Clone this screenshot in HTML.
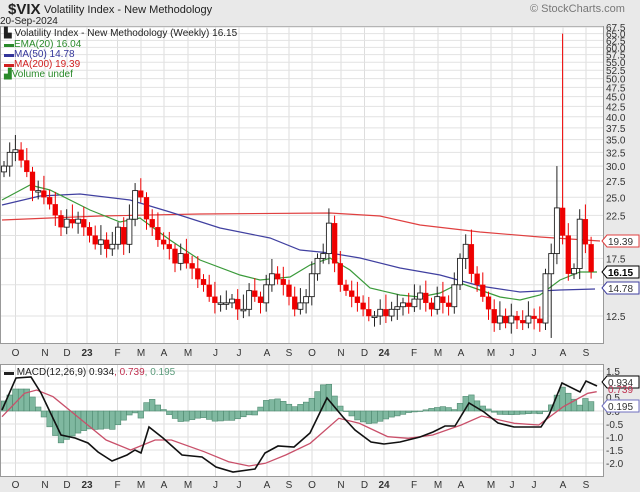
<!DOCTYPE html>
<html><head><meta charset="utf-8"><style>
html,body{margin:0;padding:0;background:#e9e9e9;width:640px;height:492px;overflow:hidden}
svg{display:block;font-family:"Liberation Sans",sans-serif}
</style></head><body>
<svg id="s" width="640" height="492" xmlns="http://www.w3.org/2000/svg">
<rect width="640" height="492" fill="#e9e9e9"/>
<text x="8" y="14" font-size="15" font-weight="bold" fill="#222">$VIX</text>
<text x="44" y="13" font-size="11" fill="#222">Volatility Index - New Methodology</text>
<text x="0" y="24" font-size="10" fill="#222">20-Sep-2024</text>
<text x="530" y="12" font-size="11" fill="#777">© StockCharts.com</text>
<rect x="0.5" y="26.5" width="603" height="317" fill="#fff" stroke="#999"/>
<rect x="0.5" y="364.5" width="603" height="112" fill="#fff" stroke="#999"/>
<g id="g"></g>
<text x="4" y="36" font-size="10" fill="#222">▙ Volatility Index - New Methodology (Weekly) 16.15</text>
<text x="4" y="47" font-size="10" fill="#2a8a2a">▬EMA(20) 16.04</text>
<text x="4" y="57" font-size="10" fill="#33359a">▬MA(50) 14.78</text>
<text x="4" y="67" font-size="10" fill="#d02020">▬MA(200) 19.39</text>
<text x="4" y="77" font-size="10" fill="#2a8a2a">▟Volume undef</text>
<text x="4" y="375" font-size="10" fill="#222">▬ MACD(12,26,9) 0.934<tspan fill="#c03050">, 0.739</tspan><tspan fill="#5a9a7a">, 0.195</tspan></text>
</svg>
<script>
var g=document.getElementById('g'),h='';
function Y(p){return 748.7-171.3*Math.log(p);}
var months=[[15.5,'O'],[45,'N'],[67,'D'],[87,'23'],[117.5,'F'],[141,'M'],[164,'A'],[188,'M'],[215.5,'J'],[239,'J'],[267,'A'],[289,'S'],[312,'O'],[341,'N'],[364.5,'D'],[384,'24'],[414,'F'],[438,'M'],[461,'A'],[491,'M'],[512,'J'],[534,'J'],[563,'A'],[586,'S']];
months.forEach(function(m){
 h+='<line x1="'+m[0]+'" y1="27" x2="'+m[0]+'" y2="343" stroke="#ddd"/><line x1="'+m[0]+'" y1="365" x2="'+m[0]+'" y2="476" stroke="#ddd"/>';
 var b=m[1].length>1;
 h+='<text x="'+m[0]+'" y="356" font-size="10" text-anchor="middle" fill="#333"'+(b?' font-weight="bold"':'')+'>'+m[1]+'</text>';
 h+='<text x="'+m[0]+'" y="488" font-size="10" text-anchor="middle" fill="#333"'+(b?' font-weight="bold"':'')+'>'+m[1]+'</text>';
});
var labs=[67.5,65,62.5,60,57.5,55,52.5,50,47.5,45,42.5,40,37.5,35,32.5,30,27.5,25,22.5,17.5,12.5];
[67.5,65,62.5,60,57.5,55,52.5,50,47.5,45,42.5,40,37.5,35,32.5,30,27.5,25,22.5,20,17.5,15,12.5].forEach(function(p){var y=Y(p);h+='<line x1="1" y1="'+y+'" x2="603" y2="'+y+'" stroke="#e2e2e2"/>';});
labs.forEach(function(p){h+='<text x="606" y="'+(Y(p)+4)+'" font-size="10" fill="#333">'+p.toFixed(1)+'</text>';});
[[1.5,371],[1,384],[0.5,397],[0,411],[-0.5,424],[-1,437],[-1.5,450],[-2,463]].forEach(function(a){
 h+='<line x1="1" y1="'+a[1]+'" x2="603" y2="'+a[1]+'" stroke="#e2e2e2"/>';
 h+='<text x="606" y="'+(a[1]+4)+'" font-size="10" fill="#333">'+a[0].toFixed(1)+'</text>';});
var c=[30,32.5,33,31,29,26,26,25,24,22.5,21,22,21.5,22,21,20,19,19.5,18.5,19,21,19,22,26,25,22,21,19.5,19,18.5,17,18,17,16.5,15.5,15,14,13.5,13.5,13.5,13.8,13,13,14.5,14,13.5,15,16,15.5,15,14,13,13.5,14,16,17.5,18,21.5,17,15,14.5,14,13.5,13,12.5,12.5,13,12.5,13,13.2,13.5,13.2,13.8,14.3,13.5,13,14,13.5,13.2,15,17.5,19,16,15,14,13,12,12.5,12,12.5,12.2,12,12.5,12.3,12,16,18,23.5,20,16,16.5,22,19,16.2];
function pl(a){return a.map(function(p){return p[0].toFixed(1)+','+p[1].toFixed(1)}).join(' ');}
var mac=[[2,410],[16,378],[31,377],[41,393],[61,435],[75,438],[88,443],[98,452],[112,461],[127,455],[135,450],[141,453],[149,427],[163,438],[182,455],[202,457],[216,467],[233,472],[255,469],[265,453],[278,446],[294,447],[310,433],[327,398],[343,417],[355,430],[371,442],[384,444],[400,442],[420,437],[433,432],[445,426],[455,426],[469,403],[484,412],[498,423],[514,427],[541,427],[549,415],[562,383],[580,392],[586,381],[597,386]];
var sg=[[5,230],[60,160],[90,150],[130,170],[200,240],[260,300],[320,330],[380,300],[420,300],[500,335],[560,365],[610,378],[650,370],[700,345],[760,310],[830,235],[880,250],[950,290],[1000,295],[1060,285],[1130,255],[1180,228],[1260,250],[1320,255],[1380,200],[1440,160],[1462,155]].map(function(p){return [p[0]/2.45,340+p[1]/3]});
function interp(a,x){if(x<=a[0][0])return a[0][1];for(var i=1;i<a.length;i++)if(x<=a[i][0]){var t=(x-a[i-1][0])/(a[i][0]-a[i-1][0]);return a[i-1][1]+t*(a[i][1]-a[i-1][1]);}return a[a.length-1][1];}
var startH=[-10,-16,-22,-22,-22,-14,-4,6];
for(var i=0;i<c.length;i++){var x=4+i*5.7,d=(interp(mac,x)-interp(sg,x));if(i<8)d=startH[i];var y0=411,y1=411+d;
 h+='<rect x="'+(x-2.8)+'" y="'+Math.min(y0,y1)+'" width="5.6" height="'+Math.max(0.5,Math.abs(d))+'" fill="#7fb8a0" stroke="#4f8a70" stroke-width="0.6"/>';}
h+='<polyline points="'+pl(sg)+'" fill="none" stroke="#c9506a" stroke-width="1.3"/>';
h+='<polyline points="'+pl(mac)+'" fill="none" stroke="#111" stroke-width="1.6"/>';
var m200=[[2,220],[50,218],[100,216],[200,214],[330,213],[380,216],[420,225],[480,232],[540,237],[600,241]];
var m50=[[2,205],[40,196],[80,194],[130,200],[170,212],[220,228],[270,238],[300,250],[330,253],[360,258],[400,268],[440,275],[480,286],[520,292],[560,290],[595,289]];
var e20=[[2,200],[30,185],[50,190],[90,210],[120,222],[140,218],[170,240],[200,260],[240,275],[260,280],[290,277],[310,265],[330,258],[350,270],[370,288],[400,295],[420,297],[440,293],[460,283],[480,290],[500,297],[520,300],[540,295],[560,280],[580,272],[597,272]];
h+='<polyline points="'+pl(m200)+'" fill="none" stroke="#e04040" stroke-width="1.2"/>';
h+='<polyline points="'+pl(m50)+'" fill="none" stroke="#4040a0" stroke-width="1.2"/>';
h+='<polyline points="'+pl(e20)+'" fill="none" stroke="#3a9a3a" stroke-width="1.2"/>';
for(var i=0;i<c.length;i++){var x=4+i*5.7,cl=c[i],op=i?c[i-1]:29,up=cl>=op;
 var hi=Math.max(op,cl)*(1.03+((i*7)%5)*0.015),lo=Math.min(op,cl)*(0.97-((i*3)%4)*0.01);
 if(i==98)hi=65; if(i==97)hi=30; if(i==96)lo=11;
 var col=up?'#222':'#e00';
 h+='<line x1="'+x+'" y1="'+Y(hi)+'" x2="'+x+'" y2="'+Y(lo)+'" stroke="'+col+'" stroke-width="1"/>';
 var yt=Y(Math.max(op,cl)),yb=Y(Math.min(op,cl));if(yb-yt<1.5){yb=yt+1.5;}
 h+='<rect x="'+(x-2.5)+'" y="'+yt+'" width="5" height="'+(yb-yt)+'" fill="'+(up?'#fff':'#e00')+'" stroke="'+col+'" stroke-width="'+(up?0.9:0.3)+'"/>';}
function tag(y,t,col,bold){return '<path d="M602 '+y+' l5 -6 h32 v12 h-32z" fill="#fff" stroke="'+col+'"/><text x="608" y="'+(y+4)+'" font-size="10" fill="'+(bold?'#000':'#333')+'"'+(bold?' font-weight="bold"':'')+'>'+t+'</text>';}
h+=tag(241,'19.39','#e04040');h+=tag(272,'16.15','#000',1);h+=tag(288,'14.78','#4040a0');
h+=tag(382,'0.934','#000');h+='<text x="608" y="393" font-size="10" fill="#c03050">0.739</text>';h+=tag(406,'0.195','#7070c0');
g.innerHTML=h;
</script>
</body></html>
